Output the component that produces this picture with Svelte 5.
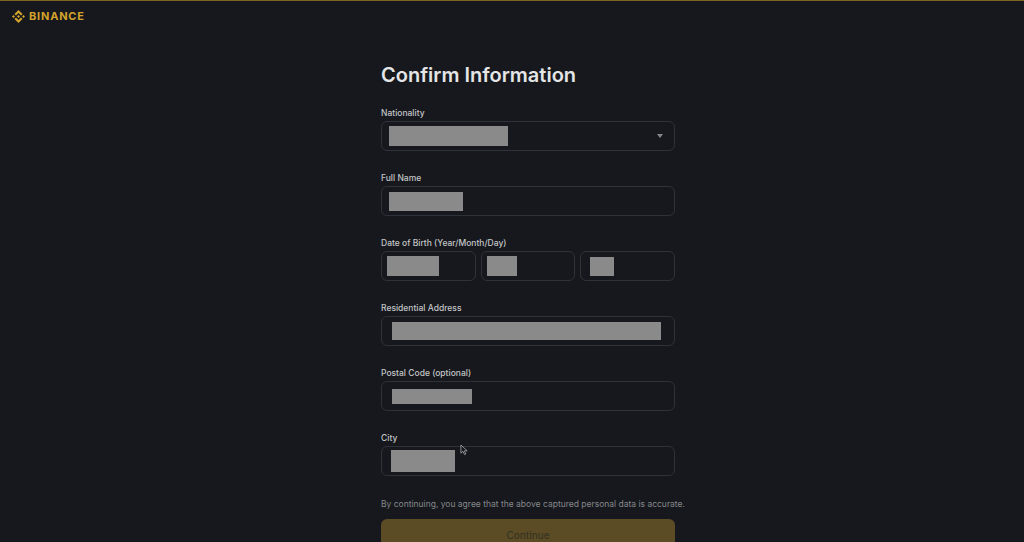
<script>
  const fields = [
    { label: 'Nationality', boxes: [{ cls: 'nat' }], arrow: true },
    { label: 'Full Name', boxes: [{ cls: 'name' }] },
    { label: 'Date of Birth (Year/Month/Day)', boxes: [{ cls: 'year' }, { cls: 'month' }, { cls: 'day' }] },
    { label: 'Residential Address', boxes: [{ cls: 'addr' }] },
    { label: 'Postal Code (optional)', boxes: [{ cls: 'postal' }] },
    { label: 'City', boxes: [{ cls: 'city' }] }
  ];
</script>

<div class="page">
  <header class="top">
    <svg class="logo" viewBox="0 0 126 126" aria-hidden="true">
      <path fill="currentColor" d="M38.5 53 63 28.500 87.500 53 101.800 38.800 63 0 24.200 38.800ZM0 63 14.300 48.700 28.600 63 14.300 77.300ZM38.500 73 63 97.500 87.500 73 101.800 87.200 63 126 24.200 87.200ZM97.400 63 111.700 48.700 126 63 111.700 77.300ZM77.500 63 63 48.500 52.300 59.200 51 60.500 48.500 63 63 77.500 77.500 63Z"/>
    </svg>
    <span class="brand">BINANCE</span>
  </header>

  <main class="form">
    <h1>Confirm Information</h1>
    {#each fields as f}
      <section class="field">
        <div class="label">{f.label}</div>
        <div class="row">
          {#each f.boxes as b}
            <div class="input">
              <div class="redact {b.cls}"></div>
              {#if f.arrow}<span class="arrow"></span>{/if}
            </div>
          {/each}
        </div>
      </section>
    {/each}
    <p class="note">By continuing, you agree that the above captured personal data is accurate.</p>
    <div class="btn">Continue</div>
  </main>

  <svg class="cursor" viewBox="0 0 10 13" aria-hidden="true">
    <path d="M1 1v9l2.300-2 1.700 3.600 1.500-.7L4.800 7.400H8Z" fill="#16181d" stroke="#b9babc" stroke-width=".8"/>
  </svg>
</div>

<style>
  :global(body) {
    margin: 0;
    background: #16181d;
    overflow: hidden;
  }
  .page {
    position: relative;
    height: 542px;
    overflow: hidden;
    box-sizing: border-box;
    border-top: 1px solid #7d6523;
    background: #16181d;
    font-family: Inter, "Noto Sans", sans-serif;
    color: #c9cacc;
  }
  .top {
    display: flex;
    align-items: center;
    gap: 4px;
    padding: 8px 0 0 12px;
    height: 15px;
    color: #d3a32c;
  }
  .logo {
    width: 13px;
    height: 13px;
    flex: none;
  }
  .brand {
    font-size: 11px;
    font-weight: 700;
    letter-spacing: 0.8px;
    line-height: 13px;
  }
  .form {
    width: 294px;
    margin-left: 381px;
    padding-top: 39px;
  }
  h1 {
    margin: 0 0 20px;
    font-size: 20px;
    line-height: 24px;
    font-weight: 600;
    color: #e4e5e6;
  }
  .field {
    height: 65px;
  }
  .label {
    font-size: 8.500px;
    line-height: 12px;
    font-weight: 500;
    color: #c4c5c7;
  }
  .row {
    display: flex;
    gap: 5px;
    margin-top: 2px;
  }
  .input {
    flex: 1;
    height: 30px;
    box-sizing: border-box;
    border: 1px solid #2f3238;
    border-radius: 6px;
    display: flex;
    align-items: center;
    justify-content: space-between;
    padding-right: 10px;
  }
  .redact {
    background: #8a8a8a;
    height: 20px;
  }
  .nat { width: 119px; margin-left: 7px; }
  .name { width: 74px; margin-left: 7px; height: 19px; }
  .year { width: 52px; margin-left: 5px; }
  .month { width: 30px; margin-left: 5px; }
  .day { width: 24px; margin-left: 9px; height: 19px; }
  .addr { width: 269px; margin-left: 10px; height: 18px; }
  .postal { width: 80px; margin-left: 10px; height: 15px; }
  .city { width: 64px; margin-left: 9px; height: 22px; }
  .arrow {
    width: 0;
    height: 0;
    border-left: 3.500px solid transparent;
    border-right: 3.500px solid transparent;
    border-top: 4px solid #85878b;
    margin-right: 1px;
  }
  .note {
    margin: 0;
    font-size: 8.500px;
    line-height: 12px;
    color: #85878b;
    white-space: nowrap;
    padding-top: 1px;
  }
  .btn {
    margin-top: 9px;
    height: 32px;
    border-radius: 6px;
    background: #5b4c25;
    color: #383423;
    display: flex;
    align-items: center;
    justify-content: center;
    font-size: 10px;
    font-weight: 500;
  }
  .cursor {
    position: absolute;
    left: 460px;
    top: 443px;
    width: 9px;
    height: 12px;
  }
</style>
